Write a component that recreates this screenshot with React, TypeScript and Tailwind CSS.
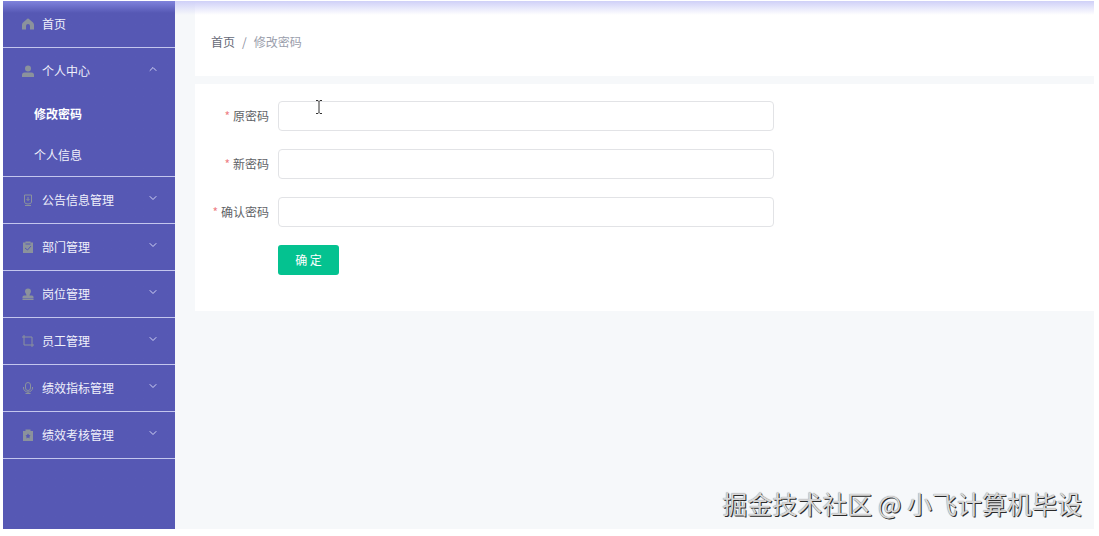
import React, { useState } from 'react';
import { ChevronDown, ChevronUp } from 'lucide-react';

interface MenuItem {
  id: string;
  label: string;
  icon: React.ReactNode;
  children?: string[];
}

const Icon: React.FC<{ children: React.ReactNode }> = ({ children }) => (
  <svg viewBox="0 0 24 24" className="h-3 w-3 shrink-0 text-[#8b929c]" fill="currentColor" aria-hidden="true">
    {children}
  </svg>
);

const MENU: MenuItem[] = [
  {
    id: 'home',
    label: '首页',
    icon: <Icon><path d="M12 1 C11 1 10 2 9 3 L2 9 C1 10 0 12 0 14 V23 H8 V16 a4 4 0 0 1 8 0 V23 H24 V14 C24 12 23 10 22 9 L15 3 C14 2 13 1 12 1 Z" /></Icon>,
  },
  {
    id: 'center',
    label: '个人中心',
    icon: <Icon><circle cx="12" cy="7" r="6" /><path d="M0 24 V20 a5 5 0 0 1 5-5 H19 a5 5 0 0 1 5 5 V24 Z" /></Icon>,
    children: ['修改密码', '个人信息'],
  },
  {
    id: 'notice',
    label: '公告信息管理',
    icon: (
      <Icon>
        <path
          d="M5 2 H19 V16 a7 4 0 0 1 -14 0 Z M6 23 H18 M12 6 V13 M9 10 L12 13 L15 10"
          fill="none"
          stroke="currentColor"
          strokeWidth="2"
        />
      </Icon>
    ),
  },
  {
    id: 'dept',
    label: '部门管理',
    icon: (
      <Icon>
        <path d="M2 3 H7 V1 H17 V3 H22 V24 H2 Z" />
        <path d="M7 6 H17 M6 14 L11 18 L18 10" fill="none" stroke="#5658b4" strokeWidth="2" />
      </Icon>
    ),
  },
  {
    id: 'post',
    label: '岗位管理',
    icon: <Icon><path d="M12 1 a6 6 0 0 1 6 6 C18 10 15 12 15 15 H20 a3 3 0 0 1 3 3 V20 H1 V18 a3 3 0 0 1 3-3 H9 C9 12 6 10 6 7 A6 6 0 0 1 12 1 Z M1 21 H23 V24 H1 Z" /></Icon>,
  },
  {
    id: 'staff',
    label: '员工管理',
    icon: <Icon><path d="M4 0 V20 H24 M0 4 H20 V24" fill="none" stroke="currentColor" strokeWidth="2" /></Icon>,
  },
  {
    id: 'metric',
    label: '绩效指标管理',
    icon: (
      <Icon>
        <path
          d="M12 1 a5 5 0 0 1 5 5 V12 a5 5 0 0 1 -10 0 V6 a5 5 0 0 1 5 -5 Z M3 10 V12 a9 8 0 0 0 18 0 V10 M12 20 V23 M7 23 H17"
          fill="none"
          stroke="currentColor"
          strokeWidth="2"
        />
      </Icon>
    ),
  },
  {
    id: 'review',
    label: '绩效考核管理',
    icon: (
      <Icon>
        <path d="M2 4 H7 V1 H17 V4 H22 V24 H2 Z" />
        <path d="M12 9 L14 12 L17 13 L15 15 L15 19 L12 17 L9 19 L9 15 L7 13 L10 12 Z" fill="#5658b4" />
      </Icon>
    ),
  },
];

const FIELDS = [
  { id: 'oldPassword', label: '原密码' },
  { id: 'newPassword', label: '新密码' },
  { id: 'confirmPassword', label: '确认密码' },
];

const Sidebar: React.FC = () => {
  const [open, setOpen] = useState('center');

  return (
    <nav className="w-[172px] shrink-0 bg-[#5658b4] bg-linear-to-b from-[#8083dc] to-[#5658b4] to-[12px] text-xs text-[#f0f0fb]">
      <ul>
        {MENU.map((item) => {
          const expanded = item.children !== undefined && open === item.id;
          const Chevron = expanded ? ChevronUp : ChevronDown;
          return (
            <li key={item.id} className="border-b border-[#c4c6ee]">
              <button
                type="button"
                className="flex h-[46px] w-full items-center gap-2 pr-4 pl-[19px] text-left"
                onClick={() => setOpen(expanded ? '' : item.id)}
              >
                {item.icon}
                <span className="flex-1">{item.label}</span>
                {item.id !== 'home' && <Chevron className="mb-1 h-3 w-3 text-[#d3d4f4]" />}
              </button>
              {expanded && (
                <ul>
                  {item.children?.map((child, idx) => (
                    <li key={child}>
                      <a href="#" className={`flex h-[41px] items-center pb-0.5 pl-[31px] ${idx === 0 ? 'font-bold text-white' : ''}`}>
                        {child}
                      </a>
                    </li>
                  ))}
                </ul>
              )}
            </li>
          );
        })}
      </ul>
    </nav>
  );
};

const App: React.FC = () => {
  return (
    <div className="flex min-h-screen bg-white pt-px pr-[5px] pb-[7px] pl-[3px] font-['Noto_Sans_CJK_SC','Liberation_Sans',sans-serif]">
      <Sidebar />

      <div className="relative flex flex-1 flex-col bg-[#f6f8fa] pl-5">
        {/* Top glow under the header bar */}
        <div className="absolute inset-x-0 top-0 h-[14px] bg-linear-to-b from-[#cfd0f8] to-transparent" />

        <div className="flex h-[75px] items-center bg-white px-4 pt-4 pb-[9px] text-xs">
          <nav aria-label="breadcrumb" className="flex gap-[7px]">
            <a href="#" className="text-[#666a78]">首页</a>
            <span className="text-[#8b8fa0]">/</span>
            <span className="text-[#9a9eac]">修改密码</span>
          </nav>
        </div>

        <main className="mt-2 bg-white pt-[17px] pb-9">
          <form className="flex flex-col gap-[18px]" onSubmit={(e) => e.preventDefault()}>
            {FIELDS.map((field) => (
              <div key={field.id} className="flex items-center">
                <label htmlFor={field.id} className="w-[83px] shrink-0 pr-[9px] text-right text-xs text-[#606266]">
                  <span className="mr-[3px] text-[#ee7f86]">*</span>
                  {field.label}
                </label>
                <input
                  id={field.id}
                  type="password"
                  className="h-[30px] w-[496px] rounded border border-[#e2e3e6] bg-white px-3 text-xs outline-none"
                />
              </div>
            ))}
            <button type="submit" className="ml-[83px] h-[30px] w-[61px] rounded-[3px] bg-[#04c290] text-xs text-white">
              确 定
            </button>
          </form>
        </main>

        {/* Text cursor */}
        <svg viewBox="0 0 8 14" className="absolute top-[99px] left-[140px] h-[14px] w-2" fill="none" stroke="#333" aria-hidden="true">
          <path d="M1 0.5 H3 L4 1.5 L5 0.5 H7 M4 1.5 V12.5 M1 13.5 H3 L4 12.5 L5 13.5 H7" />
        </svg>

        <p className="absolute right-3 bottom-2 text-[25px] leading-9 text-[#d8d8d8] [text-shadow:1px_1px_0_#2a2a2a,0_0_1px_#777]">
          掘金技术社区 @ 小飞计算机毕设
        </p>
      </div>
    </div>
  );
};

export default App;
